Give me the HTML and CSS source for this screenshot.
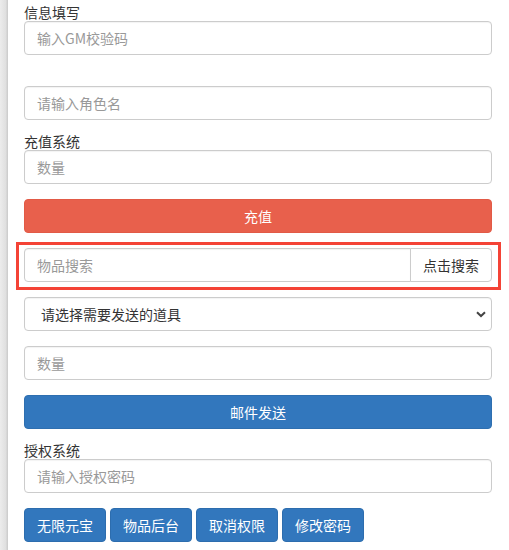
FILE: index.html
```html
<!DOCTYPE html>
<html lang="zh-CN">
<head>
<meta charset="utf-8">
<title>GM</title>
<link rel="stylesheet" href="styles.css">
</head>
<body>
<div class="page">
  <div class="edge"></div>
  <div class="content">
    <label class="lbl lbl-first">信息填写</label>
    <input class="fc" type="text" placeholder="输入GM校验码">
    <input class="fc gap-role" type="text" placeholder="请输入角色名">
    <label class="lbl gap-label">充值系统</label>
    <input class="fc" type="text" placeholder="数量">
    <button class="btn-block btn-red gap-15">充值</button>
    <div class="highlight">
      <div class="input-group">
        <input class="fc ig-input" type="text" placeholder="物品搜索">
        <button class="ig-btn">点击搜索</button>
      </div>
    </div>
    <div class="select-wrap">
      <select class="fc sel">
        <option>请选择需要发送的道具</option>
      </select>
      <svg class="chev" width="10" height="7" viewBox="0 0 10 7"><path d="M1 1.2 L5 5 L9 1.2" fill="none" stroke="#444" stroke-width="2"/></svg>
    </div>
    <input class="fc gap-15" type="text" placeholder="数量">
    <button class="btn-block btn-blue gap-15">邮件发送</button>
    <label class="lbl gap-label">授权系统</label>
    <input class="fc" type="text" placeholder="请输入授权密码">
    <div class="btn-row gap-15">
      <button class="btn-sm">无限元宝</button>
      <button class="btn-sm">物品后台</button>
      <button class="btn-sm">取消权限</button>
      <button class="btn-sm">修改密码</button>
    </div>
  </div>
</div>
</body>
</html>
```
FILE: styles.css
```css
* { box-sizing: border-box; }
html, body { margin: 0; padding: 0; background: #fff; }
body {
  font-family: "Noto Sans CJK SC", "Noto Sans", sans-serif;
  font-size: 14px;
  color: #333;
}
.page {
  display: flex;
  min-height: 550px;
}
.edge {
  width: 8px;
  flex: 0 0 8px;
  background: linear-gradient(to right, #ececec 0%, #e0e0e0 70%, #c9c9c9 100%);
}
.content {
  flex: 1;
  display: flex;
  flex-direction: column;
  padding: 4px 17px 0 16px;
}
.lbl {
  display: block;
  line-height: 17px;
  height: 17px;
  font-size: 14px;
  color: #333;
}
.gap-label { margin-top: 13px; }
.gap-role { margin-top: 31px; }
.gap-15 { margin-top: 15px; }
.fc {
  display: block;
  width: 100%;
  height: 34px;
  padding: 0 12px;
  font: inherit;
  font-size: 14px;
  line-height: 32px;
  color: #555;
  background: #fff;
  border: 1px solid #ccc;
  border-radius: 4px;
  box-shadow: inset 0 1px 1px rgba(0,0,0,0.05);
  outline: none;
}
.fc::placeholder { color: #999; }
.btn-block {
  display: block;
  width: 100%;
  height: 34px;
  font: inherit;
  font-size: 14px;
  color: #fff;
  border-radius: 4px;
  cursor: pointer;
}
.btn-red { background: #e8604c; border: 1px solid #e25a46; }
.btn-blue { background: #3277bd; border: 1px solid #2e6fb0; }
.highlight {
  margin: 9px -9px 0 -8px;
  border: 3px solid #f44336;
  padding: 3px 6px 5px 5px;
}
.input-group { display: flex; }
.ig-input {
  flex: 1;
  width: auto;
  border-radius: 4px 0 0 4px;
}
.ig-btn {
  width: 82px;
  height: 34px;
  margin-left: -1px;
  padding: 0 12px;
  font: inherit;
  font-size: 14px;
  color: #333;
  background: #fff;
  border: 1px solid #ccc;
  border-radius: 0 4px 4px 0;
}
.select-wrap {
  position: relative;
  margin-top: 7px;
}
.sel {
  appearance: none;
  -webkit-appearance: none;
  padding-left: 16px;
  color: #333;
}
.chev {
  position: absolute;
  right: 6px;
  top: 14px;
  pointer-events: none;
}
.btn-row {
  display: flex;
  gap: 4px;
}
.btn-sm {
  width: 82px;
  height: 34px;
  padding: 0 12px;
  font: inherit;
  font-size: 14px;
  color: #fff;
  background: #3277bd;
  border: 1px solid #2d6dae;
  border-radius: 4px;
}
```
